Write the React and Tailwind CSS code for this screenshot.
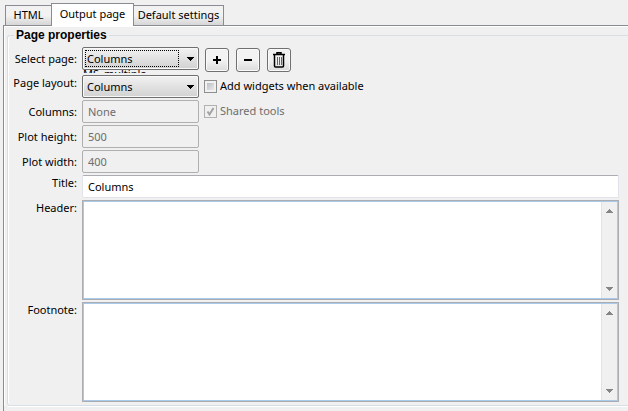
import React from "react";

const fieldBox =
  "block h-[23px] w-full rounded-[2px] border text-[11px] outline-none";

function Tab({ label, active }) {
  return (
    <button
      type="button"
      role="tab"
      aria-selected={!!active}
      className={
        active
          ? "relative z-10 -mb-px h-[23px] w-[83px] border border-b-0 border-[#898c95] bg-white pb-px text-center whitespace-nowrap"
          : "h-5 border border-b-0 border-[#898c95] bg-gradient-to-b from-[#f2f2f2] from-50% to-[#d6d6d6] text-center whitespace-nowrap " +
            (label === "HTML" ? "-mr-px w-[47px]" : "-ml-px w-[91px]")
      }
    >
      {label}
    </button>
  );
}

function Row({ id, label, top, children, extra, wide }) {
  return (
    <div className="flex items-start">
      <label
        htmlFor={id}
        className={
          "mr-[5px] w-[69px] shrink-0 text-right whitespace-nowrap " +
          (top ? "leading-4" : "leading-[23px]")
        }
      >
        {label}
      </label>
      <div className={wide ? "min-w-0 flex-1" : "w-[117px] shrink-0"}>
        {children}
      </div>
      {extra}
    </div>
  );
}

function Combo({ id, focused, options }) {
  return (
    <div className="relative">
      <select
        id={id}
        className={
          fieldBox +
          " appearance-none border-[#707070] bg-gradient-to-b from-[#f2f2f2] to-[#d2d2d2] pl-1 leading-4 text-black shadow-[inset_0_0_0_1px_#f8f8f8]"
        }
      >
        {options.map((o) => (
          <option key={o}>{o}</option>
        ))}
      </select>
      {focused && (
        <span className="pointer-events-none absolute inset-y-[3px] right-5 left-[3px] border border-dotted border-black" />
      )}
      <svg
        className="pointer-events-none absolute top-[10px] right-[5px]"
        width="7"
        height="4"
        shapeRendering="crispEdges"
        aria-hidden="true"
      >
        <path d="M0 0h7v1H0zM1 1h5v1H1zM2 2h3v1H2zM3 3h1v1H3z" />
      </svg>
    </div>
  );
}

function IconButton({ label, children }) {
  return (
    <button
      type="button"
      aria-label={label}
      className="flex size-6 items-center justify-center rounded-[3px] border border-[#707070] bg-gradient-to-b from-[#f2f2f2] from-50% to-[#dcdcdc] shadow-[inset_0_0_0_1px_#fafafa]"
    >
      {children}
    </button>
  );
}

function ScrollArrow({ down }) {
  return (
    <svg width="7" height="4" aria-hidden="true" shapeRendering="crispEdges">
      <path
        fill="#858585"
        d={
          down
            ? "M0 0h7v1H0zM1 1h5v1H1zM2 2h3v1H2zM3 3h1v1H3z"
            : "M3 0h1v1H3zM2 1h3v1H2zM1 2h5v1H1zM0 3h7v1H0z"
        }
      />
    </svg>
  );
}

function TextPane({ id }) {
  return (
    <div className="flex h-[100px] border border-[#abadb3] bg-white">
      <div className="flex min-w-0 flex-1 border border-[#a9c9e8]">
        <textarea
          id={id}
          className="block h-full min-w-0 flex-1 resize-none bg-white px-1 outline-none"
        />
        <div className="flex w-4 flex-col items-center justify-between border-l border-[#e3e3e3] bg-[#f0f0f0] py-[7px]">
          <ScrollArrow />
          <ScrollArrow down />
        </div>
      </div>
    </div>
  );
}

function Check({ label, disabled }) {
  return (
    <label
      className={
        "ml-[5px] flex h-[23px] items-center gap-[3px] whitespace-nowrap " +
        (disabled ? "text-[#6d6d6d]" : "")
      }
    >
      <span className="relative size-[13px]">
        <input
          type="checkbox"
          defaultChecked={disabled}
          disabled={disabled}
          className={
            "block size-[13px] appearance-none border " +
            (disabled
              ? "border-[#b1b1b1] bg-[#f0f0f0]"
              : "border-[#8e8f8f] bg-gradient-to-br from-[#aeb3b9] to-[#f6f6f6] shadow-[inset_0_0_0_2px_#f1f1f1]")
          }
        />
        {disabled && (
          <svg
            className="pointer-events-none absolute inset-0"
            width="13"
            height="13"
            aria-hidden="true"
          >
            <path
              d="M3.5 6.5L5.5 9.5L9.5 3"
              fill="none"
              stroke="#a3a3a3"
              strokeWidth="2"
            />
          </svg>
        )}
      </span>
      {label}
    </label>
  );
}

const disabledField =
  fieldBox + " border-[#afafaf] bg-[#f0f0f0] px-[5px] text-[#6d6d6d]";

export default function App() {
  return (
    <main className="min-h-screen overflow-hidden bg-[#f0f0f0] pt-[3px] pl-[3px] font-['Noto_Sans','Open_Sans',sans-serif] text-[11px] text-black">
      <div role="tablist" className="flex h-[22px] items-end pl-[2px]">
        <Tab label="HTML" />
        <Tab label="Output page" active />
        <Tab label="Default settings" />
      </div>
      <section className="min-h-[calc(100vh-25px)] border-t border-l border-[#898c95]">
        <div className="border-t border-l border-white pl-[2px]">
          <fieldset className="min-w-0 rounded-l-[3px] border border-r-0 border-[#d5dfe5] pr-[9px] pb-[3px] shadow-[0_1px_0_#fff,inset_1px_0_0_#fff]">
            <legend className="ml-[6px] px-[2px] font-['Liberation_Sans',Arial,sans-serif] text-[12px] leading-[16px] font-bold">
              Page properties
            </legend>
            <div className="flex flex-col gap-[2px] pt-1">
              <Row
                id="page"
                label="Select page:"
                extra={
                  <div className="mt-px ml-[6px] flex gap-[7px]">
                    <IconButton label="Add page">
                      <svg width="10" height="10" aria-hidden="true">
                        <path d="M4 1h2v3h3v2H6v3H4V6H1V4h3z" />
                      </svg>
                    </IconButton>
                    <IconButton label="Remove page">
                      <svg width="10" height="10" aria-hidden="true">
                        <path d="M1 4h8v2H1z" />
                      </svg>
                    </IconButton>
                    <IconButton label="Delete page">
                      <svg
                        width="14"
                        height="16"
                        className="shrink-0"
                        fill="none"
                        stroke="#000"
                        aria-hidden="true"
                      >
                        <path
                          d="M1 2.5h12M2.5 3v11q0 1 1 1h7q1 0 1-1V3M5 2V.8h4V2"
                          strokeWidth="1.5"
                        />
                        <path d="M5.5 5v8M7.5 5v8M9.5 5v8" stroke="#666" />
                      </svg>
                    </IconButton>
                  </div>
                }
              >
                <Combo id="page" focused options={["Columns", "MS_multiple"]} />
                <div className="h-[3px] overflow-hidden pl-px">
                  <div className="-mt-1 leading-[15px]">MS_multiple</div>
                </div>
              </Row>
              <Row
                id="layout"
                label="Page layout:"
                top
                extra={<Check label="Add widgets when available" />}
              >
                <Combo id="layout" options={["Columns"]} />
              </Row>
              <Row
                id="columns"
                label="Columns:"
                extra={<Check label="Shared tools" disabled />}
              >
                <input
                  id="columns"
                  disabled
                  defaultValue="None"
                  className={disabledField}
                />
              </Row>
              <Row id="height" label="Plot height:">
                <input
                  id="height"
                  disabled
                  defaultValue="500"
                  className={disabledField}
                />
              </Row>
              <Row id="width" label="Plot width:">
                <input
                  id="width"
                  disabled
                  defaultValue="400"
                  className={disabledField}
                />
              </Row>
              <Row id="title" label="Title:" top wide>
                <input
                  id="title"
                  defaultValue="Columns"
                  className={
                    fieldBox +
                    " border-[#e2e3ea] border-t-[#abadb3] bg-white px-[5px]"
                  }
                />
              </Row>
              <Row id="header" label="Header:" top wide>
                <TextPane id="header" />
              </Row>
              <Row id="footnote" label="Footnote:" top wide>
                <TextPane id="footnote" />
              </Row>
            </div>
          </fieldset>
        </div>
      </section>
    </main>
  );
}
